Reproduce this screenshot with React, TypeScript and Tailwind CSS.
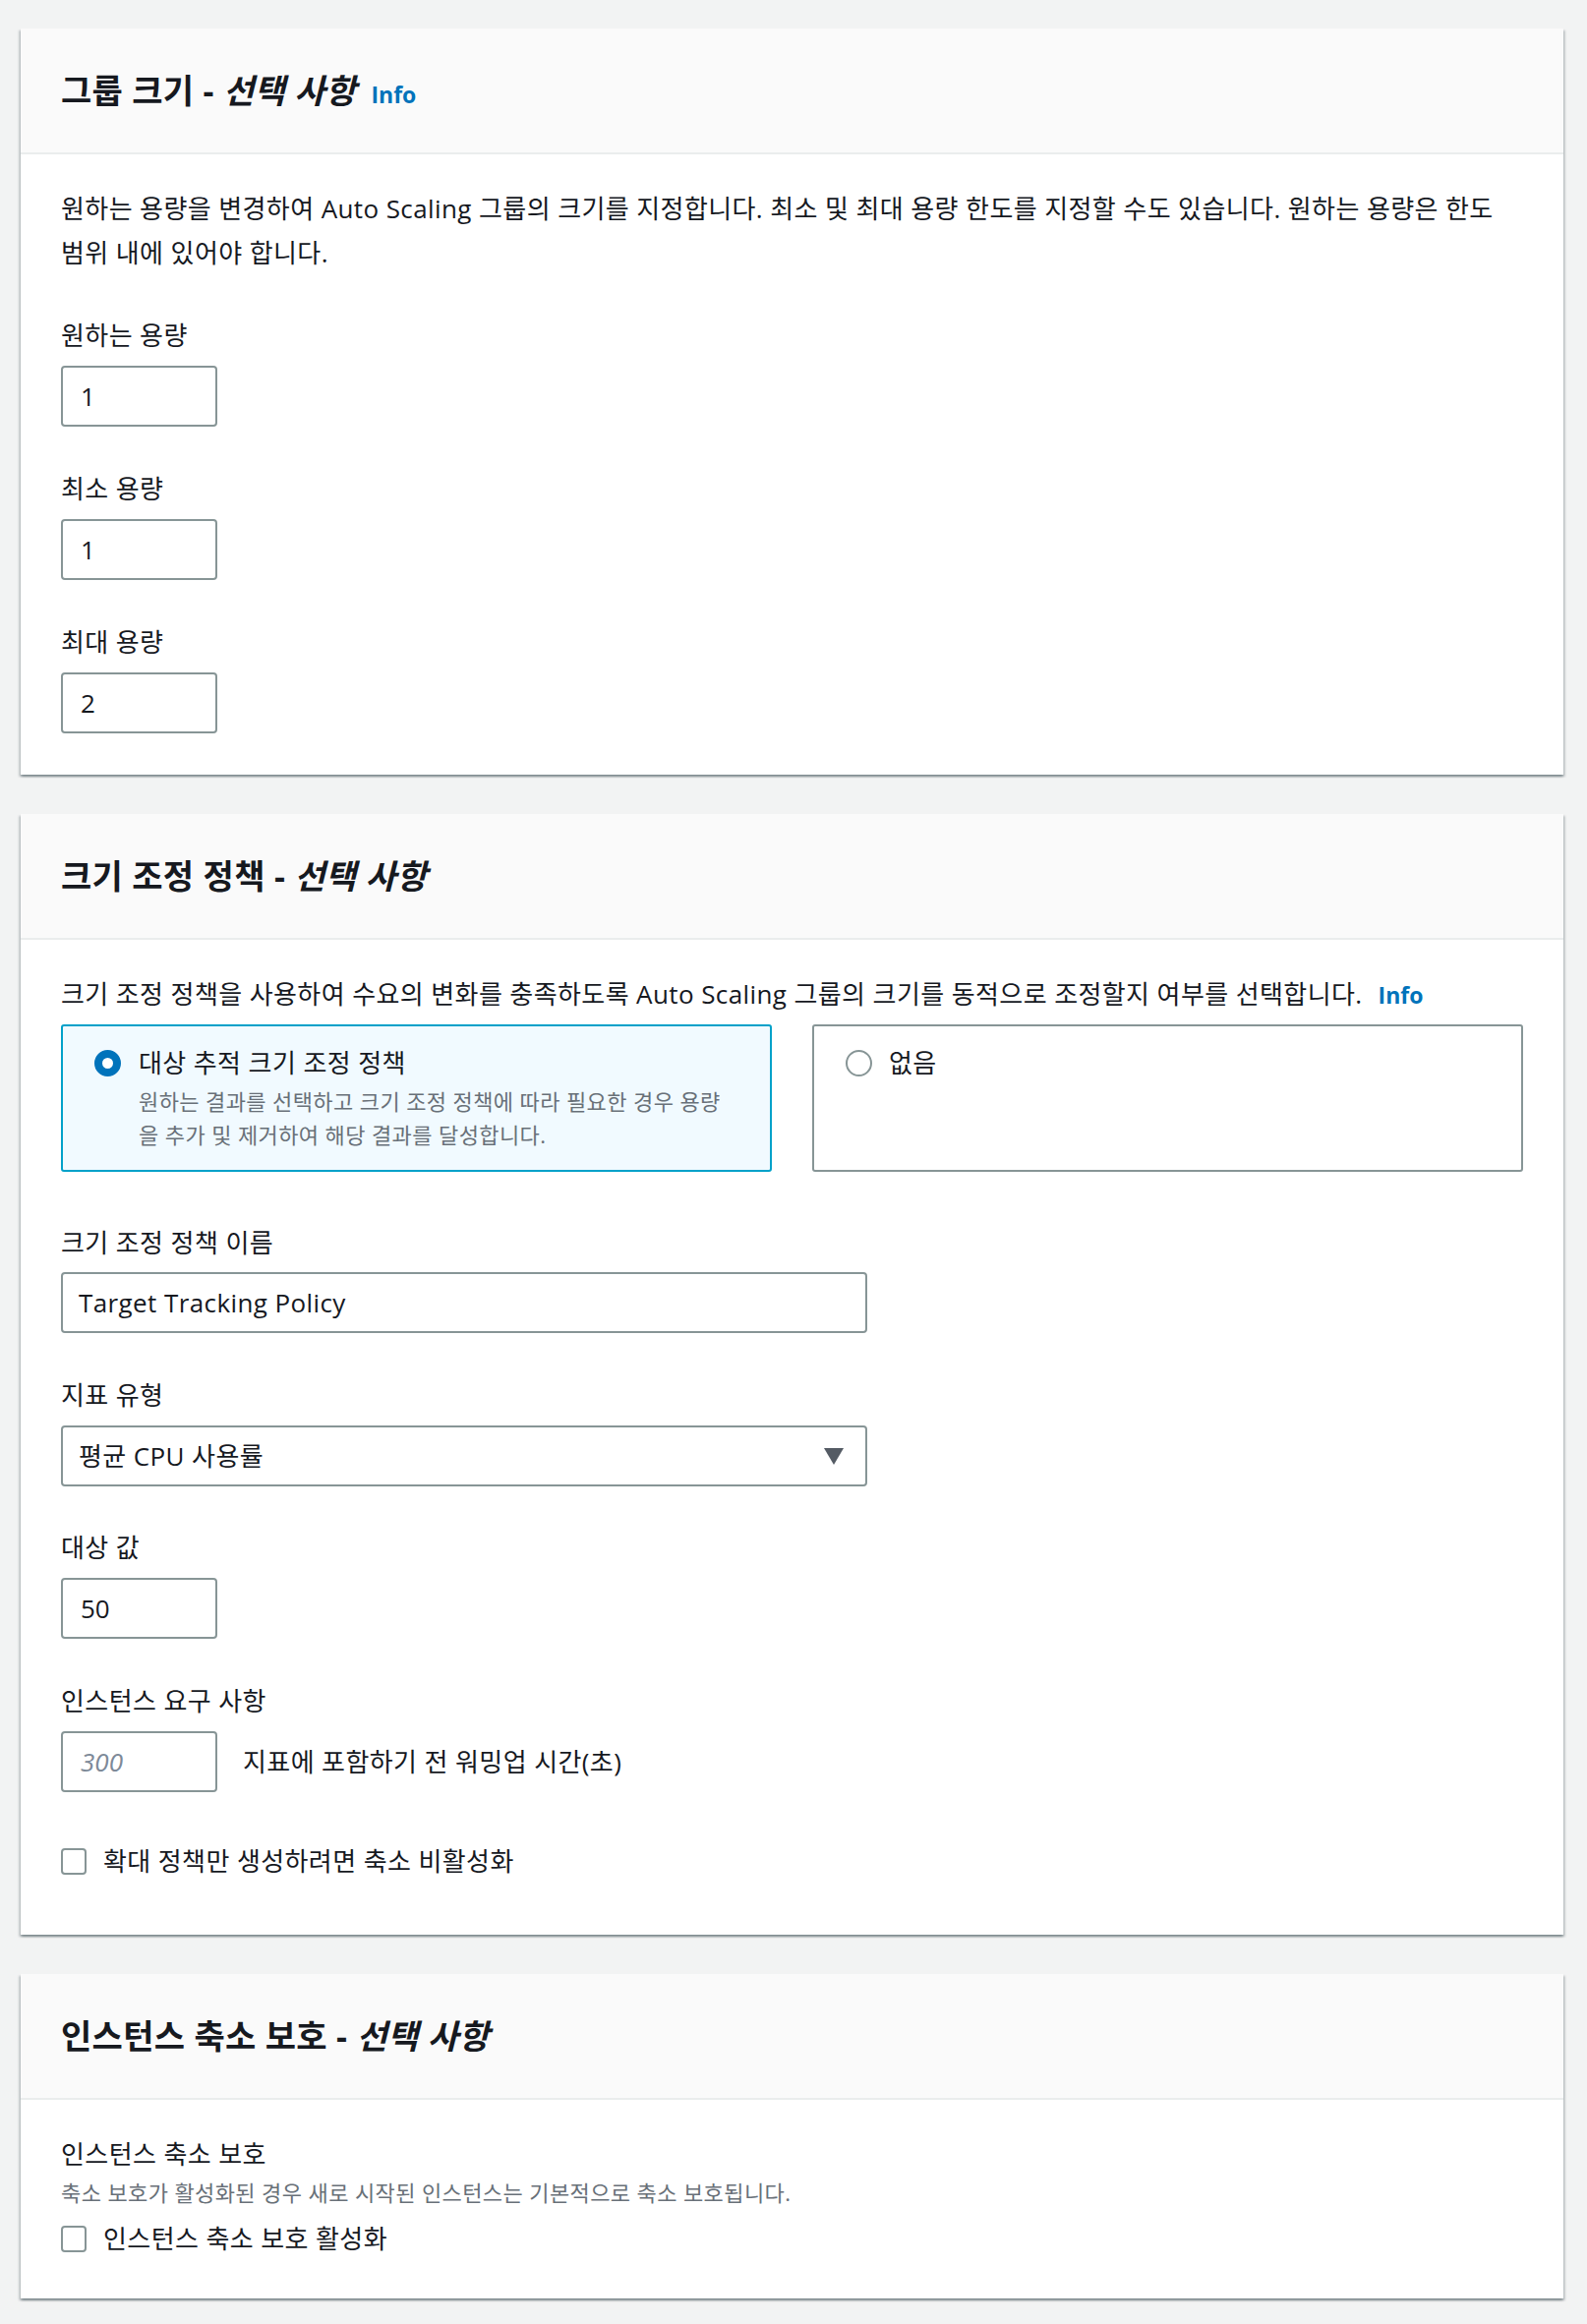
import React from "react";

const font = { fontFamily: '"Open Sans", "Noto Sans CJK KR", sans-serif' };

const Card = ({ title, info, children }: { title: React.ReactNode; info?: boolean; children: React.ReactNode }) => (
  <section className="mr-[24px] ml-[21px] bg-white shadow-[0_2px_2px_0_rgba(0,28,36,0.3),2px_2px_2px_0_rgba(0,28,36,0.15),-2px_2px_2px_0_rgba(0,28,36,0.15)]">
    <div className="h-[128px] flex items-center px-[41px] bg-[#fafafa] border-b-2 border-[#eaeded]">
      <h2 className="text-[34px] tracking-[0.3px] font-bold text-[#16191f] leading-none flex items-baseline">
        {title}
        {info && <span className="ml-[15px] text-[23px] tracking-normal font-bold text-[#0073bb]">Info</span>}
      </h2>
    </div>
    {children}
  </section>
);

const Label = ({ children }: { children: React.ReactNode }) => (
  <div className="text-[26px] tracking-[0.4px] leading-[44px] text-[#16191f]">{children}</div>
);

const SmallInput = ({ value, placeholder }: { value?: string; placeholder?: string }) => (
  <div className="mt-[9px] w-[159px] h-[62px] border-2 border-[#879596] rounded-[4px] flex items-center px-[18px] text-[26px]">
    {value ? (
      <span className="text-[#16191f]">{value}</span>
    ) : (
      <span className="italic text-[#7d8998]">{placeholder}</span>
    )}
  </div>
);

const Checkbox = ({ label }: { label: string }) => (
  <div className="flex items-center gap-[17px]">
    <span className="w-[26px] h-[27px] border-2 border-[#879596] rounded-[4px] bg-white" />
    <span className="text-[26px] tracking-[0.4px] leading-[44px] text-[#16191f]">{label}</span>
  </div>
);

export default function App() {
  return (
    <div style={font} className="min-h-[2364px] bg-[#f2f3f3] pt-[29px] pb-[26px] flex flex-col gap-[40px]">
      {/* 그룹 크기 */}
      <Card
        info
        title={
          <>
            그룹 크기 -&nbsp;<span className="italic">선택 사항</span>
          </>
        }
      >
        <div className="px-[41px] pt-[33px] pb-[42px]">
          <p className="text-[26px] tracking-[0.4px] leading-[45px] text-[#16191f] whitespace-nowrap">
            원하는 용량을 변경하여 Auto Scaling 그룹의 크기를 지정합니다. 최소 및 최대 용량 한도를 지정할 수도 있습니다. 원하는 용량은 한도
            <br />
            범위 내에 있어야 합니다.
          </p>
          <div className="mt-[39px]">
            <Label>원하는 용량</Label>
            <SmallInput value="1" />
          </div>
          <div className="mt-[41px]">
            <Label>최소 용량</Label>
            <SmallInput value="1" />
          </div>
          <div className="mt-[41px]">
            <Label>최대 용량</Label>
            <SmallInput value="2" />
          </div>
        </div>
      </Card>

      {/* 크기 조정 정책 */}
      <Card
        title={
          <>
            크기 조정 정책 -&nbsp;<span className="italic">선택 사항</span>
          </>
        }
      >
        <div className="px-[41px] pt-[33px] pb-[53px]">
          <p className="text-[26px] tracking-[0.4px] leading-[44px] text-[#16191f] whitespace-nowrap">
            크기 조정 정책을 사용하여 수요의 변화를 충족하도록 Auto Scaling 그룹의 크기를 동적으로 조정할지 여부를 선택합니다.
            <span className="ml-[16px] text-[23px] tracking-normal font-bold text-[#0073bb]">Info</span>
          </p>
          <div className="mt-[8px] grid grid-cols-2 gap-[41px]">
            <div className="border-2 border-[#00a1c9] bg-[#f1faff] rounded-[3px] pl-[32px] pr-[20px] pt-[15px] pb-[19px] flex gap-[18px]">
              <span className="mt-[9px] w-[27px] h-[27px] rounded-full border-[8px] border-[#0073bb] bg-white shrink-0" />
              <div>
                <div className="text-[26px] tracking-[0.4px] leading-[44px] text-[#16191f]">대상 추적 크기 조정 정책</div>
                <div className="text-[22px] tracking-[0.4px] leading-[34px] text-[#687078] whitespace-nowrap">
                  원하는 결과를 선택하고 크기 조정 정책에 따라 필요한 경우 용량
                  <br />을 추가 및 제거하여 해당 결과를 달성합니다.
                </div>
              </div>
            </div>
            <div className="border-2 border-[#879596] bg-white rounded-[3px] pl-[32px] pt-[15px] flex gap-[17px]">
              <span className="mt-[9px] w-[27px] h-[27px] rounded-full border-2 border-[#879596] bg-white shrink-0" />
              <div className="text-[26px] tracking-[0.4px] leading-[44px] text-[#16191f]">없음</div>
            </div>
          </div>

          <div className="mt-[50px]">
            <Label>크기 조정 정책 이름</Label>
            <div className="mt-[8px] w-[820px] h-[62px] border-2 border-[#879596] rounded-[4px] flex items-center px-[16px] text-[26px] tracking-[0.4px] text-[#16191f]">
              Target Tracking Policy
            </div>
          </div>

          <div className="mt-[41px]">
            <Label>지표 유형</Label>
            <div className="mt-[9px] w-[820px] h-[62px] border-2 border-[#879596] rounded-[4px] flex items-center justify-between pl-[16px] pr-[22px] text-[26px] tracking-[0.4px] text-[#16191f]">
              <span>평균 CPU 사용률</span>
              <svg width="20" height="17" viewBox="0 0 20 17">
                <polygon points="0,0 20,0 10,17" fill="#545b64" />
              </svg>
            </div>
          </div>

          <div className="mt-[40px]">
            <Label>대상 값</Label>
            <SmallInput value="50" />
          </div>

          <div className="mt-[41px]">
            <Label>인스턴스 요구 사항</Label>
            <div className="flex items-center gap-[26px]">
              <SmallInput placeholder="300" />
              <span className="mt-[9px] text-[26px] tracking-[0.4px] leading-[44px] text-[#16191f]">지표에 포함하기 전 워밍업 시간(초)</span>
            </div>
          </div>

          <div className="mt-[48px]">
            <Checkbox label="확대 정책만 생성하려면 축소 비활성화" />
          </div>
        </div>
      </Card>

      {/* 인스턴스 축소 보호 */}
      <Card
        title={
          <>
            인스턴스 축소 보호 -&nbsp;<span className="italic">선택 사항</span>
          </>
        }
      >
        <div className="px-[41px] pt-[33px] pb-[39px]">
          <Label>인스턴스 축소 보호</Label>
          <div className="text-[22px] tracking-[0.4px] leading-[34px] text-[#687078]">
            축소 보호가 활성화된 경우 새로 시작된 인스턴스는 기본적으로 축소 보호됩니다.
          </div>
          <div className="mt-[8px]">
            <Checkbox label="인스턴스 축소 보호 활성화" />
          </div>
        </div>
      </Card>
    </div>
  );
}
